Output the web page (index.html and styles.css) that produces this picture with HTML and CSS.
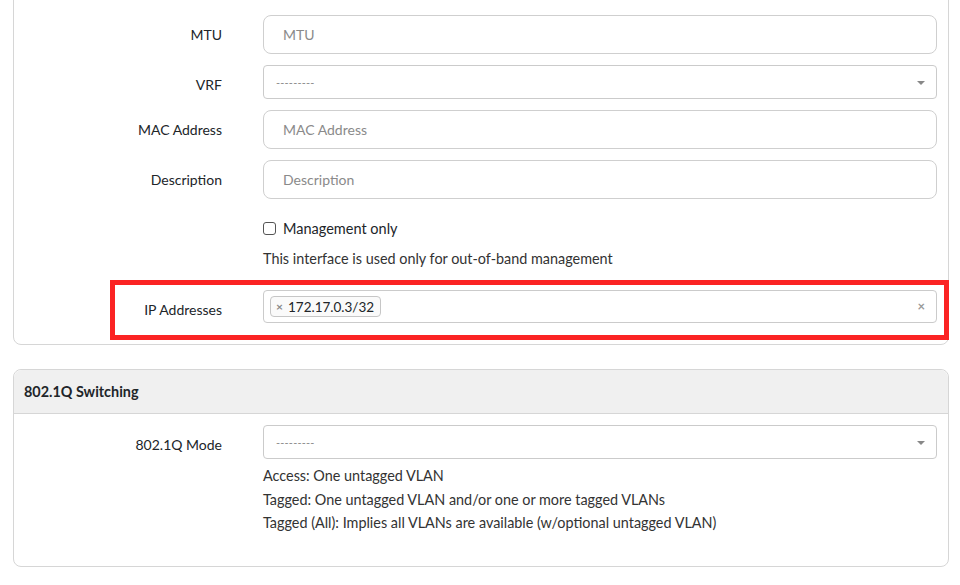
FILE: index.html
```html
<!DOCTYPE html>
<html lang="en">
<head>
<meta charset="utf-8">
<title>Interface</title>
<link rel="stylesheet" href="styles.css">
</head>
<body>
<div class="page">
  <section class="panel panel-cut">
    <div class="panel-body">
      <div class="field">
        <label class="field-label">MTU</label>
        <input class="input input-lg" type="text" placeholder="MTU">
      </div>
      <div class="field">
        <label class="field-label">VRF</label>
        <div class="select"><span class="select-placeholder">---------</span><span class="caret"></span></div>
      </div>
      <div class="field">
        <label class="field-label">MAC Address</label>
        <input class="input input-lg" type="text" placeholder="MAC Address">
      </div>
      <div class="field">
        <label class="field-label">Description</label>
        <input class="input input-lg" type="text" placeholder="Description">
      </div>
      <div class="field field-check">
        <span></span>
        <div>
          <label class="check"><span class="checkbox"></span>Management only</label>
          <div class="help help-single">This interface is used only for out-of-band management</div>
        </div>
      </div>
      <div class="field field-ip">
        <label class="field-label">IP Addresses</label>
        <div class="select multi">
          <span class="tag"><span class="tag-x">×</span>172.17.0.3/32</span>
          <span class="clear">×</span>
        </div>
        <div class="highlight"></div>
      </div>
    </div>
  </section>

  <section class="panel panel-second">
    <div class="panel-head">802.1Q Switching</div>
    <div class="panel-body body-second">
      <div class="field">
        <label class="field-label">802.1Q Mode</label>
        <div>
          <div class="select"><span class="select-placeholder">---------</span><span class="caret"></span></div>
          <div class="help help-lines">
            <div>Access: One untagged VLAN</div>
            <div>Tagged: One untagged VLAN and/or one or more tagged VLANs</div>
            <div>Tagged (All): Implies all VLANs are available (w/optional untagged VLAN)</div>
          </div>
        </div>
      </div>
    </div>
  </section>
</div>
</body>
</html>
```

FILE: styles.css
```css
* { box-sizing: border-box; }
html, body { margin: 0; padding: 0; background: #fff; }
body {
  font-family: "Lato", "Noto Sans", sans-serif;
  font-size: 14px;
  color: #212529;
  overflow: hidden;
}
.page {
  padding: 0 11px 0 13px;
  width: 960px;
}
.panel {
  border: 1px solid #d6d6d6;
  border-radius: 8px;
  background: #fff;
}
.panel-cut {
  margin-top: -20px;
}
.panel-body {
  padding: 34px 11px 11px 0;
}
.field {
  position: relative;
  display: grid;
  grid-template-columns: 208px 674px;
  column-gap: 41px;
  align-items: start;
  margin-bottom: 11px;
}
.field-label {
  text-align: right;
  line-height: 20px;
  padding-top: 10px;
  color: #212529;
}
.input {
  display: block;
  width: 100%;
  font: inherit;
  color: #212529;
  background: #fff;
  border: 1px solid #cfcfcf;
  outline: none;
}
.input::placeholder { color: #8a8a8a; }
.input-lg {
  height: 39px;
  border-radius: 8px;
  padding: 0 19px;
}
.select {
  position: relative;
  height: 34px;
  border: 1px solid #cbcbcb;
  border-radius: 4px;
  display: flex;
  align-items: center;
  padding: 0 12px;
  background: #fff;
}
.select-placeholder {
  color: #8a8a8a;
  font-size: 11px;
  letter-spacing: 0.2px;
}
.caret {
  position: absolute;
  right: 11px;
  top: 15px;
  width: 0;
  height: 0;
  border-style: solid;
  border-width: 4px 4px 0 4px;
  border-color: #888 transparent transparent transparent;
}
.field-check { margin-top: 19px; margin-bottom: 21px; }
.check {
  display: flex;
  align-items: center;
  gap: 7px;
  line-height: 20px;
  height: 21px;
  color: #212529;
  font-size: 14.5px;
}
.checkbox {
  width: 13px;
  height: 13px;
  border: 1px solid #555;
  border-radius: 3px;
  background: #fff;
}
.help {
  color: #333;
  font-size: 14.4px;
}
.help-single {
  margin-top: 10px;
  line-height: 20px;
}
.multi {
  height: 33px;
  padding: 0 6px;
}
.tag {
  display: inline-flex;
  align-items: center;
  height: 21px;
  padding: 0 6px 0 5px;
  border: 1px solid #c6c6c6;
  border-radius: 4px;
  background: #fafafa;
  color: #212529;
  font-size: 13.5px;
}
.tag-x {
  color: #888;
  font-weight: 700;
  font-size: 12px;
  margin-right: 5px;
}
.clear {
  position: absolute;
  right: 11px;
  top: 7px;
  color: #999;
  font-weight: 700;
  font-size: 13px;
}
.field-ip { margin-top: 0; margin-bottom: 10px; }
.highlight {
  position: absolute;
  left: 96px;
  right: -12px;
  top: -10px;
  height: 60px;
  border: 5px solid #fb2323;
  pointer-events: none;
}
.panel-second {
  margin-top: 24px;
}
.panel-head {
  height: 44px;
  line-height: 43px;
  padding-left: 10px;
  background: #f0f0f0;
  border-bottom: 1px solid #d6d6d6;
  border-radius: 8px 8px 0 0;
  font-weight: 700;
  font-size: 14.4px;
  color: #212529;
}
.body-second {
  padding-top: 11px;
  padding-bottom: 20px;
}
.help-lines {
  margin-top: 5px;
  line-height: 23.5px;
}
```
